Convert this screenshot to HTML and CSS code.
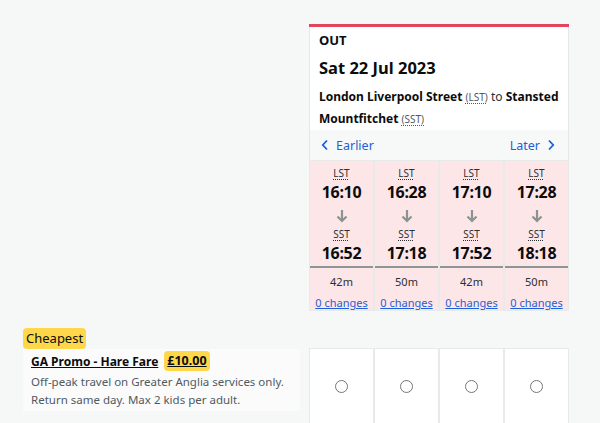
FILE: index.html
```html
<!DOCTYPE html>
<html lang="en">
<head>
    <meta charset="UTF-8">
    <meta name="viewport" content="width=device-width, initial-scale=1.0">
    <title>Choose your train</title>
    <link rel="stylesheet" href="styles.css">
</head>
<body>
    <div class="page">
        <div class="top-row">
            <div class="spacer"></div>
            <div class="journey">
                <div class="journey-head">
                    <div class="direction">OUT</div>
                    <div class="date">Sat 22 Jul 2023</div>
                    <div class="route"><b>London Liverpool Street</b> <abbr>(LST)</abbr> <span>to</span> <b>Stansted</b> <b>Mountfitchet</b> <abbr>(SST)</abbr></div>
                </div>
                <div class="pager">
                    <a href="#" class="pager-link">
                        <svg width="8" height="12" viewBox="0 0 8 12"><path d="M6 1.5 1.8 6 6 10.5" fill="none" stroke="currentColor" stroke-width="1.8"/></svg>
                        Earlier
                    </a>
                    <a href="#" class="pager-link">
                        Later
                        <svg width="8" height="12" viewBox="0 0 8 12"><path d="M2 1.5 6.2 6 2 10.5" fill="none" stroke="currentColor" stroke-width="1.8"/></svg>
                    </a>
                </div>
                <div class="trains">
                    <div class="train">
                        <div class="times">
                            <abbr class="stn">LST</abbr>
                            <div class="time">16:10</div>
                            <div class="arrow"><svg width="12" height="14" viewBox="0 0 12 14"><path d="M6 1v11M1.5 7.5 6 12l4.5-4.5" fill="none" stroke="currentColor" stroke-width="2.2"/></svg></div>
                            <abbr class="stn">SST</abbr>
                            <div class="time">16:52</div>
                        </div>
                        <div class="meta">
                            <div class="dur">42m</div>
                            <a href="#" class="changes">0 changes</a>
                        </div>
                    </div>
                    <div class="train">
                        <div class="times">
                            <abbr class="stn">LST</abbr>
                            <div class="time">16:28</div>
                            <div class="arrow"><svg width="12" height="14" viewBox="0 0 12 14"><path d="M6 1v11M1.5 7.5 6 12l4.5-4.5" fill="none" stroke="currentColor" stroke-width="2.2"/></svg></div>
                            <abbr class="stn">SST</abbr>
                            <div class="time">17:18</div>
                        </div>
                        <div class="meta">
                            <div class="dur">50m</div>
                            <a href="#" class="changes">0 changes</a>
                        </div>
                    </div>
                    <div class="train">
                        <div class="times">
                            <abbr class="stn">LST</abbr>
                            <div class="time">17:10</div>
                            <div class="arrow"><svg width="12" height="14" viewBox="0 0 12 14"><path d="M6 1v11M1.5 7.5 6 12l4.5-4.5" fill="none" stroke="currentColor" stroke-width="2.2"/></svg></div>
                            <abbr class="stn">SST</abbr>
                            <div class="time">17:52</div>
                        </div>
                        <div class="meta">
                            <div class="dur">42m</div>
                            <a href="#" class="changes">0 changes</a>
                        </div>
                    </div>
                    <div class="train">
                        <div class="times">
                            <abbr class="stn">LST</abbr>
                            <div class="time">17:28</div>
                            <div class="arrow"><svg width="12" height="14" viewBox="0 0 12 14"><path d="M6 1v11M1.5 7.5 6 12l4.5-4.5" fill="none" stroke="currentColor" stroke-width="2.2"/></svg></div>
                            <abbr class="stn">SST</abbr>
                            <div class="time">18:18</div>
                        </div>
                        <div class="meta">
                            <div class="dur">50m</div>
                            <a href="#" class="changes">0 changes</a>
                        </div>
                    </div>
                </div>
            </div>
        </div>

        <div class="fare-row">
            <div class="fare-info">
                <span class="badge">Cheapest</span>
                <div class="fare-box">
                    <div class="fare-title">
                        <a href="#" class="fare-name">GA Promo - Hare Fare</a>
                        <span class="price">£10.00</span>
                    </div>
                    <p class="fare-desc">Off-peak travel on Greater Anglia services only. Return same day. Max 2 kids per adult.</p>
                </div>
            </div>
            <div class="picks">
                <label class="pick"><input type="radio" name="out"></label>
                <label class="pick"><input type="radio" name="out"></label>
                <label class="pick"><input type="radio" name="out"></label>
                <label class="pick"><input type="radio" name="out"></label>
            </div>
        </div>
    </div>
</body>
</html>
```

FILE: styles.css
```css
body {
    margin: 0;
    background-color: #f6f7f7;
    font-family: 'Noto Sans', 'Open Sans', sans-serif;
    color: #0b0c0c;
}
.page {
    padding-top: 24px;
}
.top-row {
    display: flex;
}
.spacer {
    width: 309px;
    flex: none;
}
.journey {
    width: 260px;
    border-top: 3px solid #e2455d;
}
.journey-head {
    background-color: #ffffff;
    border-left: 1px solid #e4e7e7;
    border-right: 1px solid #e4e7e7;
    padding: 4px 4px 0 9px;
}
.direction {
    font-size: 13px;
    font-weight: bold;
    line-height: 18px;
}
.date {
    font-size: 16.5px;
    font-weight: bold;
    line-height: 24px;
    margin: 7px 0 6px;
}
.route {
    font-size: 12px;
    line-height: 21px;
    color: #2b2f31;
}
.route b {
    color: #0b0c0c;
}
abbr {
    font-size: 10px;
    color: #505a5f;
    text-decoration: underline dotted;
    text-underline-offset: 2px;
}
.pager {
    display: flex;
    justify-content: space-between;
    align-items: center;
    height: 30px;
    padding: 0 13px 0 11px;
    background-color: #f7f8f8;
    border-left: 1px solid #e4e7e7;
    border-right: 1px solid #e4e7e7;
}
.pager-link {
    display: flex;
    align-items: center;
    gap: 7px;
    color: #1d5fd6;
    text-decoration: none;
    font-size: 12.5px;
}
.trains {
    display: flex;
    gap: 2px;
    background-color: #e8eaea;
    border: 1px solid #e8eaea;
}
.train {
    flex: 1;
    background-color: #fde6e8;
    text-align: center;
}
.times {
    padding-top: 6px;
    border-bottom: 2px solid #8e9595;
    height: 99px;
}
.stn {
    display: block;
    width: max-content;
    margin: 0 auto;
    font-size: 10px;
    color: #2b2f31;
    line-height: 13px;
}
.time {
    font-size: 16px;
    font-weight: bold;
    letter-spacing: -0.3px;
    line-height: 24px;
}
.arrow {
    height: 24px;
    display: flex;
    align-items: center;
    justify-content: center;
    color: #8b9292;
}
.meta {
    box-sizing: border-box;
    padding-top: 5px;
    height: 42px;
}
.dur {
    font-size: 11px;
    line-height: 17px;
    color: #2b2f31;
}
.changes {
    font-size: 11px;
    line-height: 16px;
    color: #1d5fd6;
}
.fare-row {
    display: flex;
    margin-top: 15px;
}
.fare-info {
    width: 277px;
    margin-left: 23px;
    margin-right: 9px;
}
.badge {
    display: inline-block;
    background-color: #fed84a;
    border-radius: 4px;
    font-size: 13px;
    line-height: 21px;
    padding: 0 3px;
}
.fare-box {
    padding: 2px 4px 2px 8px;
    background-color: #fbfbfb;
}
.fare-title {
    display: flex;
    align-items: center;
    gap: 6px;
}
.fare-name {
    color: #0b0c0c;
    font-weight: bold;
    font-size: 12px;
}
.price {
    background-color: #fed84a;
    border-radius: 4px;
    font-weight: bold;
    font-size: 12.5px;
    text-decoration: underline;
    padding: 0 3px;
    line-height: 20px;
}
.fare-desc {
    margin: 2px 0 0;
    font-size: 11.5px;
    line-height: 18px;
    color: #505a5f;
}
.picks {
    display: flex;
    gap: 2px;
    width: 258px;
    margin-top: 22px;
    height: 74px;
    background-color: #e8eaea;
    border: 1px solid #e8eaea;
}
.pick {
    flex: 1;
    background-color: #ffffff;
    display: flex;
    align-items: center;
    justify-content: center;
}
.pick input {
    margin: 0;
    width: 13px;
    height: 13px;
}
```
